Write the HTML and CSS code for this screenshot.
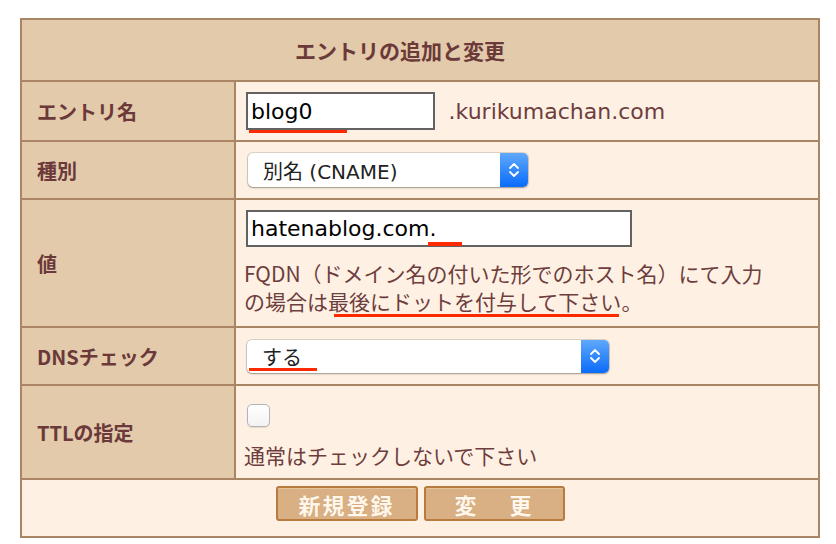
FILE: index.html
```html
<!DOCTYPE html>
<html lang="ja">
<head>
  <meta charset="UTF-8" />
  <title>エントリの追加と変更</title>
  <link rel="stylesheet" href="styles.css">
</head>
<body>
  <table class="entry-form">
    <tr>
      <th colspan="2" class="title">エントリの追加と変更</th>
    </tr>
    <tr class="row-name">
      <td class="label">エントリ名</td>
      <td class="value">
        <span class="mark-wrap">
          <input type="text" class="text-input short" value="blog0">
          <span class="mark mark-name"></span>
        </span>
        <span class="domain">.kurikumachan.com</span>
      </td>
    </tr>
    <tr class="row-type">
      <td class="label">種別</td>
      <td class="value">
        <div class="select select-type">
          <span class="select-text">別名 (CNAME)</span>
          <span class="stepper">
            <svg width="14" height="20" viewBox="0 0 14 20">
              <path d="M3 8 L7 4 L11 8 M3 12 L7 16 L11 12" fill="none" stroke="#fff" stroke-width="1.8" stroke-linecap="round" stroke-linejoin="round"/>
            </svg>
          </span>
        </div>
      </td>
    </tr>
    <tr class="row-value">
      <td class="label">値</td>
      <td class="value">
        <span class="mark-wrap">
          <input type="text" class="text-input long" value="hatenablog.com.">
          <span class="mark mark-dot"></span>
        </span>
        <div class="help">
          FQDN（ドメイン名の付いた形でのホスト名）にて入力<br>
          の場合は<span class="underlined">最後にドットを付与して下さい</span>。
        </div>
      </td>
    </tr>
    <tr class="row-dns">
      <td class="label">DNSチェック</td>
      <td class="value">
        <div class="select select-dns">
          <span class="select-text">する</span>
          <span class="stepper">
            <svg width="14" height="20" viewBox="0 0 14 20">
              <path d="M3 8 L7 4 L11 8 M3 12 L7 16 L11 12" fill="none" stroke="#fff" stroke-width="1.8" stroke-linecap="round" stroke-linejoin="round"/>
            </svg>
          </span>
          <span class="mark mark-dns"></span>
        </div>
      </td>
    </tr>
    <tr class="row-ttl">
      <td class="label">TTLの指定</td>
      <td class="value">
        <input type="checkbox" class="check">
        <div class="note">通常はチェックしないで下さい</div>
      </td>
    </tr>
    <tr class="row-buttons">
      <td colspan="2" class="buttons">
        <button class="btn btn-new">新規登録</button><button class="btn btn-change">変　 更</button>
      </td>
    </tr>
  </table>
</body>
</html>
```

FILE: styles.css
```css
* {
  box-sizing: border-box;
}
body {
  margin: 0;
  background: #fff;
  font-family: "Noto Sans CJK JP", sans-serif;
  color: #6e3d3d;
}
.entry-form {
  margin: 18px 0 0 20px;
  width: 800px;
  border-collapse: separate;
  border-spacing: 0;
  border: 2px solid #a98566;
}
.entry-form td {
  border-top: 2px solid #a98566;
  padding: 0;
  vertical-align: middle;
}
.title {
  height: 60px;
  padding: 0 40px 0 0;
  background: #e2caab;
  font-size: 21px;
  font-weight: bold;
  text-align: center;
  color: #6b3939;
}
.label {
  width: 212px;
  padding-left: 15px !important;
  background: #e2caab;
  font-size: 20px;
  font-weight: bold;
  color: #6b3939;
}
.value {
  border-left: 2px solid #a98566;
  background: #fef1e4;
  padding-left: 8px !important;
}
.row-name td { height: 60px; }
.row-type td { height: 58px; }
.row-value td { height: 128px; }
.row-dns td { height: 58px; }
.row-ttl td { height: 94px; }
.row-buttons td { height: 58px; }

.row-value .value {
  vertical-align: top;
  padding-top: 10px !important;
}
.row-ttl .value {
  vertical-align: top;
  padding-top: 18px !important;
}

.mark-wrap {
  position: relative;
  display: inline-block;
  vertical-align: middle;
  margin-left: 2px;
}
.text-input {
  display: block;
  height: 38px;
  margin: 0;
  padding: 0 0 0 3px;
  border: 2px solid #626262;
  border-radius: 0;
  background: #fff;
  font-family: "DejaVu Sans", "Noto Sans CJK JP", sans-serif;
  font-size: 22px;
  color: #000;
  outline: none;
}
.text-input.short {
  width: 189px;
}
.text-input.long {
  width: 386px;
  height: 37px;
}
.domain {
  display: inline-block;
  vertical-align: middle;
  margin-left: 10px;
  font-family: "DejaVu Sans", "Noto Sans CJK JP", sans-serif;
  font-size: 22px;
  color: #6e3d3d;
}

.select {
  position: relative;
  display: flex;
  align-items: center;
  height: 34px;
  margin-left: 3px;
  background: #fff;
  border-radius: 5px;
  box-shadow: 0 0 0 1px rgba(0, 0, 0, 0.12), 0 1px 2px rgba(0, 0, 0, 0.3);
  font-family: "DejaVu Sans", "Noto Sans CJK JP", sans-serif;
  font-size: 20px;
  color: #222;
}
.select-type {
  width: 280px;
  margin-left: 4px;
}
.select-dns {
  width: 362px;
  height: 33px;
}
.select-text {
  flex: 1;
  padding-left: 15px;
}
.stepper {
  display: flex;
  align-items: center;
  justify-content: center;
  width: 28px;
  height: 100%;
  border-radius: 0 5px 5px 0;
  background: linear-gradient(#5fa8fb, #0a6cfb);
}

.help {
  margin-top: 12px;
  font-size: 21px;
  line-height: 28px;
  color: #6e3d3d;
}
.underlined {
  position: relative;
  display: inline-block;
  line-height: 28px;
}
.underlined::after {
  content: "";
  position: absolute;
  left: 6px;
  right: 2px;
  bottom: -2px;
  height: 3px;
  background: #ff2a00;
}

.mark {
  position: absolute;
  height: 3px;
  background: #ff2a00;
}
.mark-name {
  left: 3px;
  top: 38px;
  width: 98px;
}
.mark-dot {
  left: 182px;
  top: 32px;
  width: 34px;
  height: 4px;
}
.mark-dns {
  left: 2px;
  top: 28px;
  width: 68px;
}

.check {
  display: block;
  width: 23px;
  height: 23px;
  margin: 0 0 0 3px;
  appearance: none;
  -webkit-appearance: none;
  border: 1px solid #b4b4b4;
  border-radius: 5px;
  background: linear-gradient(#fff, #f3f3f3);
  box-shadow: 0 1px 1px rgba(0, 0, 0, 0.1);
}
.note {
  margin-top: 14px;
  font-size: 21px;
  line-height: 28px;
  color: #6e3d3d;
}

.buttons {
  background: #fef1e4;
  text-align: center;
  vertical-align: top !important;
  padding-top: 6px !important;
}
.btn {
  height: 35px;
  margin: 0 3px;
  padding: 0;
  border: 2px solid #b97b3d;
  border-radius: 3px;
  background: #d9b083;
  box-shadow: inset 0 1px 0 #e6c49c;
  font-family: "Noto Sans CJK JP", sans-serif;
  font-size: 22px;
  font-weight: bold;
  line-height: 30px;
  letter-spacing: 2px;
  color: #fff7ec;
  text-shadow: 0 0 1px #c9996a;
  cursor: pointer;
}
.btn-new {
  width: 142px;
}
.btn-change {
  width: 141px;
}
```
